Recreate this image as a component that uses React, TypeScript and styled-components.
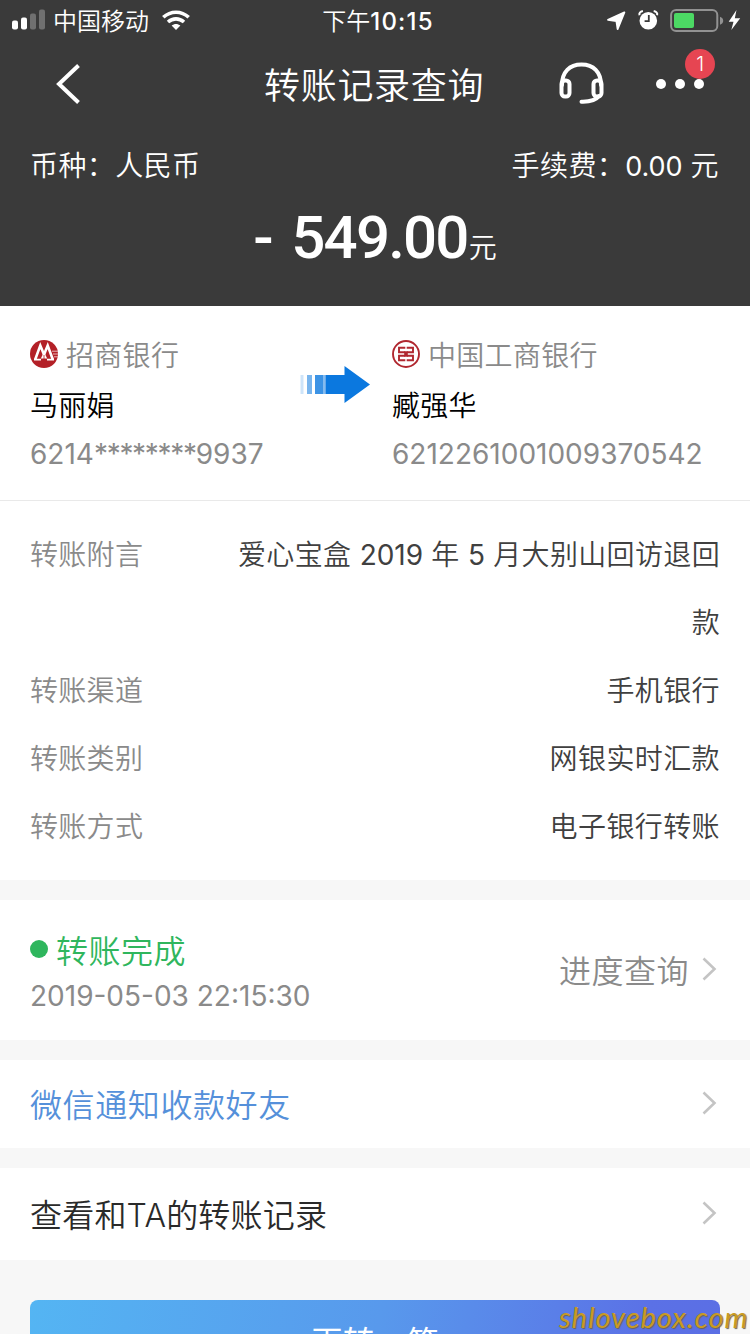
import React from "react";
import styled, { createGlobalStyle } from "styled-components";

const GlobalStyle = createGlobalStyle`
  * { box-sizing: border-box; }
  body {
    margin: 0;
    background: #f7f7f7;
    font-family: Inter, "Noto Sans CJK SC", sans-serif;
    font-weight: 350;
  }
`;

const Screen = styled.main`
  position: relative;
  width: 750px;
  height: 1334px;
  overflow: hidden;
  background: #f7f7f7;
  display: flex;
  flex-direction: column;
`;

const Text = styled.span<{ $size?: number; $track?: number; $color?: string }>`
  font-size: ${(p) => p.$size ?? 28}px;
  letter-spacing: ${(p) => p.$track ?? 0}px;
  color: ${(p) => p.$color ?? "inherit"};
  white-space: pre;
`;

const Digits = styled.span<{ $size?: number; $track?: number }>`
  font-size: ${(p) => p.$size ?? 28}px;
  font-weight: 400;
  line-height: 1;
  letter-spacing: ${(p) => p.$track ?? 0}px;
`;

const Header = styled.header`
  flex: none;
  height: 306px;
  background: #3a3a3a;
  color: #fff;
  display: flex;
  flex-direction: column;
`;

const StatusBar = styled.div`
  height: 40px;
  display: grid;
  grid-template-columns: 1fr auto 1fr;
  align-items: center;
  padding: 0 9px 0 12px;
`;

const StatusGroup = styled.div<{ $end?: boolean }>`
  display: flex;
  align-items: center;
  justify-content: ${(p) => (p.$end ? "flex-end" : "flex-start")};
`;

const Carrier = styled(Text)`
  margin: -2px 13px 0 7px;
`;

const Clock = styled.div`
  font-size: 24px;
  white-space: nowrap;
  padding: 0 0 2px 3px;
`;

const Time = styled.span`
  font-weight: 450;
  letter-spacing: 1.2px;
`;

const NavBar = styled.nav`
  height: 88px;
  display: grid;
  grid-template-columns: 264px 1fr 266px;
  align-items: center;
`;

const NavTitle = styled(Text)`
  padding-bottom: 2px;
`;

const BackSlot = styled.div`
  display: flex;
  padding-left: 54px;
`;

const NavActions = styled.div`
  display: flex;
  align-items: center;
  padding-left: 75px;
`;

const MoreButton = styled.div`
  position: relative;
  margin-left: 51px;
  width: 48px;
  height: 10px;
  display: flex;
  justify-content: space-between;
`;

const Dot = styled.i`
  position: relative;
  z-index: 1;
  width: 10px;
  height: 10px;
  border-radius: 50%;
  background: #fff;
`;

const Badge = styled.span`
  position: absolute;
  left: 29px;
  top: -30px;
  width: 30px;
  height: 30px;
  border-radius: 50%;
  background: #e64552;
  font-size: 20px;
  line-height: 30px;
  text-align: center;
`;

const FeeRow = styled.div`
  height: 72px;
  padding: 0 31px 1px 30px;
  display: flex;
  justify-content: space-between;
  align-items: center;
`;

const AmountRow = styled.div`
  height: 74px;
  display: flex;
  justify-content: center;
  align-items: baseline;
`;

const Amount = styled.span`
  font-family: Roboto, sans-serif;
  font-size: 60px;
  font-weight: 500;
  line-height: 76px;
  letter-spacing: -1.8px;
  white-space: pre;
`;

const Minus = styled(Amount)`
  width: 38px;
  letter-spacing: 0;
`;

const Unit = styled(Text)`
  padding-left: 1px;
`;

const Parties = styled.section`
  flex: none;
  height: 195px;
  background: #fff;
  border-bottom: 1px solid #e9e9e9;
  padding: 23px 30px 0;
  display: grid;
  grid-template-columns: 270px 92px 1fr;
`;

const Party = styled.div`
  display: flex;
  flex-direction: column;
`;

const PartyLine = styled.div<{ $color?: string }>`
  height: 50px;
  display: flex;
  align-items: center;
  gap: 8px;
  color: ${(p) => p.$color ?? "#8a8a8a"};
`;

const ArrowSlot = styled.div`
  padding-top: 36px;
`;

const Details = styled.section`
  flex: none;
  background: #fff;
  padding: 20px 30px 19px;
`;

const DetailRow = styled.div`
  display: flex;
  justify-content: space-between;
  line-height: 68px;
  color: #404040;
`;

const DetailValue = styled.div`
  display: flex;
  flex-direction: column;
  align-items: flex-end;
`;

const Card = styled.section<{ $height: number }>`
  flex: none;
  height: ${(p) => p.$height}px;
  margin-top: 20px;
  background: #fff;
  padding: 0 33px 2px 30px;
  display: flex;
  align-items: center;
  justify-content: space-between;
`;

const Progress = styled.div`
  display: flex;
  flex-direction: column;
  padding-top: 2px;
`;

const ProgressState = styled.div`
  display: flex;
  align-items: center;
  gap: 8px;
  height: 48px;
  color: #2fb65d;
`;

const GreenDot = styled.i`
  width: 18px;
  height: 18px;
  border-radius: 50%;
  background: #2fb65d;
  margin-bottom: 1px;
`;

const ProgressDate = styled.div`
  height: 42px;
  padding-top: 4px;
  display: flex;
  align-items: center;
  color: #8a8a8a;
`;

const ProgressLink = styled.div`
  display: flex;
  align-items: center;
  gap: 13px;
  color: #8a8a8a;
`;

const PrimaryButton = styled.button`
  flex: none;
  height: 88px;
  margin: 40px 30px 0;
  padding: 0 0 8px;
  border: 0;
  border-radius: 8px;
  background: linear-gradient(100deg, #54b5f3 0%, #5899ec 50%, #5b71e6 88%, #5b6ee4 100%);
  color: #fff;
  font-family: inherit;
`;

const Watermark = styled.div`
  position: absolute;
  left: 559px;
  top: 1300px;
  font-family: Lato, sans-serif;
  font-weight: 400;
  font-style: italic;
  font-size: 29px;
  line-height: 34px;
  letter-spacing: 1px;
  color: #c99a22;
  text-shadow: 1px 1px 1px #6b6552;
`;

const Signal = () => (
  <svg width="34" height="22" viewBox="0 0 34 22" fill="#fff">
    <rect x="0" y="11.500" width="6" height="9" rx="2" />
    <rect x="9" y="8.500" width="6" height="12" rx="2" />
    <rect x="18" y="4.500" width="6" height="16" rx="2" opacity="0.28" />
    <rect x="27" y="0.500" width="6" height="20" rx="2" opacity="0.28" />
  </svg>
);

const Wifi = () => (
  <svg width="28" height="20" viewBox="0 0 28 20" fill="none" stroke="#fff" strokeWidth="3.6">
    <path d="M1.300 7.300C8.600.500 19.400.500 26.700 7.300" />
    <path d="M6 12c4.800-4.200 11.200-4.200 16 0" />
    <path d="M9.600 15.600c2.700-2.300 6.100-2.300 8.800 0L14 20z" fill="#fff" stroke="none" />
  </svg>
);

const StatusIcons = () => (
  <svg width="136" height="28" viewBox="605 6 136 28" fill="#fff">
    <path d="M624.400 12.300 608 19.800l8.400 1.200 1.200 8.200z" strokeLinejoin="round" stroke="#fff" strokeWidth="1.800" />
    <circle cx="648.3" cy="20.8" r="8.8" />
    <path d="M639.500 15.200q-.9-3.200 3.400-4.100M657.100 15.200q.9-3.200-3.400-4.100" fill="none" stroke="#fff" strokeWidth="2" />
    <path d="M648.800 15v6.200h-4.200" fill="none" stroke="#3a3a3a" strokeWidth="1.800" />
    <rect x="671.100" y="10.100" width="46.200" height="20.800" rx="5" fill="none" stroke="#929292" strokeWidth="2" />
    <rect x="674" y="13" width="20" height="15" rx="2" fill="#4cd964" />
    <path d="M720 16.700q3.200 1.200 3.200 4t-3.200 4z" fill="#929292" />
    <path d="m736.500 10-7.800 11.800h4.800l-2.200 8.100 8.900-11.700h-5.400z" />
  </svg>
);

const Back = () => (
  <svg width="28" height="44" viewBox="0 0 28 44" fill="none" stroke="#fff" strokeWidth="4">
    <path d="M24.500 3.500 5 22l19.500 18.500" />
  </svg>
);

const Headset = () => (
  <svg width="46" height="44" viewBox="0 0 46 44" fill="none" stroke="#fff" strokeWidth="4">
    <rect x="2.500" y="18.500" width="8" height="16" rx="3.500" />
    <rect x="34.500" y="18.500" width="8" height="16" rx="3.500" />
    <path d="M3 23C3 10 10.500 2.500 22.500 2.500S42 10 42 23M40 34c-3 4-8 5.500-16 5.700H22.500" strokeLinecap="round" />
  </svg>
);

const MerchantsLogo = () => (
  <svg width="28" height="28" viewBox="0 0 28 28">
    <circle cx="14" cy="14" r="14" fill="#b32027" />
    <path d="M5.200 19.500 10.300 5.500 14 14.500l3.700-9 5.100 14" fill="none" stroke="#fff" strokeWidth="2.600" />
    <path d="M14 12 10.800 18.500h6.400z" fill="#fff" />
    <path d="M14 15v5" stroke="#b32027" strokeWidth="0.800" />
    <path d="M4 19.600h7M17 19.600h7" stroke="#fff" strokeWidth="1.600" />
    <path d="M22 11.200h6M23 14h5M24 16.800h4" stroke="#e9b8ba" strokeWidth="1" />
  </svg>
);

const IcbcLogo = () => (
  <svg width="28" height="28" viewBox="0 0 28 28" fill="none" stroke="#b0272f">
    <circle cx="14" cy="14" r="13" strokeWidth="1.900" />
    <path d="M13.300 7.800H7v4.400h6.300M14.700 7.800H21v4.400h-6.300M13.300 20.200H7v-4.400h6.300M14.700 20.200H21v-4.400h-6.300" strokeWidth="1.900" />
    <path d="M14 11.300v5.400" strokeWidth="3.600" />
  </svg>
);

const TransferArrow = () => (
  <svg width="72" height="40" viewBox="0 0 72 40" fill="#0b78df">
    <rect x="0.500" y="10" width="3" height="19" opacity="0.2" />
    <rect x="7" y="10" width="5" height="19" opacity="0.550" />
    <rect x="15" y="10" width="8" height="19" opacity="0.800" />
    <rect x="23" y="10" width="2.500" height="19" opacity="0.500" />
    <path d="M25.500 10h19V1L70 19.500 44.500 38v-9h-19z" />
  </svg>
);

const Chevron = () => (
  <svg width="15" height="24" viewBox="0 0 15 24" fill="none" stroke="#c4c4c4" strokeWidth="2.600">
    <path d="M1.500 1.500 12.500 12l-11 10.500" />
  </svg>
);

const details = [
  { label: "转账渠道", value: "手机银行" },
  { label: "转账类别", value: "网银实时汇款" },
  { label: "转账方式", value: "电子银行转账" },
];

export default function App() {
  return (
    <Screen>
      <GlobalStyle />
      <Header>
        <StatusBar>
          <StatusGroup>
            <Signal />
            <Carrier $size={24}>中国移动</Carrier>
            <Wifi />
          </StatusGroup>
          <Clock>下午<Time>10:15</Time></Clock>
          <StatusGroup $end>
            <StatusIcons />
          </StatusGroup>
        </StatusBar>
        <NavBar>
          <BackSlot><Back /></BackSlot>
          <NavTitle $size={36} $track={0.7}>转账记录查询</NavTitle>
          <NavActions>
            <Headset />
            <MoreButton>
              <Badge>1</Badge>
              <Dot /><Dot /><Dot />
            </MoreButton>
          </NavActions>
        </NavBar>
        <FeeRow>
          <Text $track={0.4}>币种：人民币</Text>
          <Text $track={0.4}>手续费：<Digits $size={27} $track={-0.1}>0.00</Digits> 元</Text>
        </FeeRow>
        <AmountRow>
          <Minus>-</Minus>
          <Amount>549.00</Amount>
          <Unit>元</Unit>
        </AmountRow>
      </Header>

      <Parties>
        <Party>
          <PartyLine><MerchantsLogo /><Text $track={0.3}>招商银行</Text></PartyLine>
          <PartyLine $color="#000"><Text $track={0.3}>马丽娟</Text></PartyLine>
          <PartyLine>
            <Text><Digits>6214</Digits><Digits $track={-1.3}>********</Digits><Digits>9937</Digits></Text>
          </PartyLine>
        </Party>
        <ArrowSlot><TransferArrow /></ArrowSlot>
        <Party>
          <PartyLine><IcbcLogo /><Text $track={0.3}>中国工商银行</Text></PartyLine>
          <PartyLine $color="#000"><Text $track={0.3}>臧强华</Text></PartyLine>
          <PartyLine><Digits>6212261001009370542</Digits></PartyLine>
        </Party>
      </Parties>

      <Details>
        <DetailRow>
          <Text $track={0.3} $color="#8a8a8a">转账附言</Text>
          <DetailValue>
            <Text $track={0.35}>爱心宝盒 <Digits>2019</Digits> 年 <Digits>5</Digits> 月大别山回访退回</Text>
            <Text $track={0.3}>款</Text>
          </DetailValue>
        </DetailRow>
        {details.map((d) => (
          <DetailRow key={d.label}>
            <Text $track={0.3} $color="#8a8a8a">{d.label}</Text>
            <Text $track={0.4}>{d.value}</Text>
          </DetailRow>
        ))}
      </Details>

      <Card $height={140}>
        <Progress>
          <ProgressState>
            <GreenDot />
            <Text $size={32} $track={0.5}>转账完成</Text>
          </ProgressState>
          <ProgressDate><Digits>2019-05-03 22:15:30</Digits></ProgressDate>
        </Progress>
        <ProgressLink>
          <Text $size={32} $track={0.5}>进度查询</Text>
          <Chevron />
        </ProgressLink>
      </Card>
      <Card $height={88}>
        <Text $size={32} $track={0.6} $color="#5590da">微信通知收款好友</Text>
        <Chevron />
      </Card>
      <Card $height={92}>
        <Text $size={32} $track={0.2} $color="#2a2a2a">查看和TA的转账记录</Text>
        <Chevron />
      </Card>
      <PrimaryButton><Text $size={32}>再转一笔</Text></PrimaryButton>
      <Watermark>shlovebox.com</Watermark>
    </Screen>
  );
}
